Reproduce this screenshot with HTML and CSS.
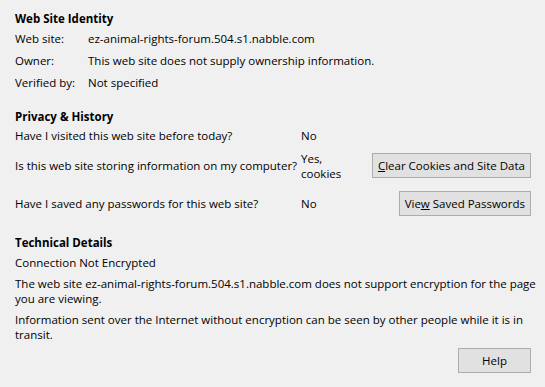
FILE: index.html
```html
<!DOCTYPE html>
<html lang="en">
<head>
  <meta charset="UTF-8">
  <title>Page Info - Security</title>
  <link rel="stylesheet" href="styles.css">
</head>
<body>
  <div class="panel">
    <section class="group">
      <h2>Web Site Identity</h2>
      <div class="identity">
        <div class="key">Web site:</div>
        <div>ez-animal-rights-forum.504.s1.nabble.com</div>
        <div class="key">Owner:</div>
        <div>This web site does not supply ownership information.</div>
        <div class="key">Verified by:</div>
        <div>Not specified</div>
      </div>
    </section>

    <section class="group privacy">
      <h2>Privacy &amp; History</h2>
      <div class="history">
        <div class="question">Have I visited this web site before today?</div>
        <div>No</div>
        <div></div>

        <div class="question">Is this web site storing information on my computer?</div>
        <div>Yes,<br>cookies</div>
        <button class="btn"><u>C</u>lear Cookies and Site Data</button>

        <div class="question">Have I saved any passwords for this web site?</div>
        <div>No</div>
        <button class="btn">Vie<u>w</u> Saved Passwords</button>
      </div>
    </section>

    <section class="group tech">
      <h2>Technical Details</h2>
      <p class="status">Connection Not Encrypted</p>
      <p>The web site ez-animal-rights-forum.504.s1.nabble.com does not support encryption for the page you are viewing.</p>
      <p>Information sent over the Internet without encryption can be seen by other people while it is in transit.</p>
    </section>

    <div class="footer">
      <button class="btn help">Help</button>
    </div>
  </div>
</body>
</html>
```

FILE: styles.css
```css
body {
  margin: 0;
  background: #f0f0f0;
  color: #000;
  font-family: "Open Sans", "Noto Sans", sans-serif;
  font-size: 11.5px;
  line-height: 15px;
}
.panel {
  width: 516px;
  padding: 11px 0 0 15px;
}
h2 {
  margin: 0;
  font-size: 11.5px;
  font-weight: bold;
}
.identity {
  display: grid;
  grid-template-columns: 73px 1fr;
  grid-auto-rows: 22px;
  align-items: center;
  margin-top: 1px;
}
.privacy {
  margin-top: 16px;
}
.history {
  display: grid;
  grid-template-columns: 286px 1fr auto;
  align-items: center;
  row-gap: 7px;
  margin-top: 4px;
}
.question {
  white-space: nowrap;
}
.btn {
  font: inherit;
  height: 25px;
  margin: 3px 0;
  padding: 0 5px;
  background: #e1e1e1;
  border: 1px solid #adadad;
  color: #000;
  justify-self: end;
}
.tech {
  margin-top: 16px;
}
.tech p {
  margin: 6px -10px 0 0;
}
.tech .status {
  margin-top: 5px;
}
.footer {
  display: flex;
  justify-content: flex-end;
  margin-top: 6px;
}
.help {
  min-width: 73px;
  margin: 0;
}
```
